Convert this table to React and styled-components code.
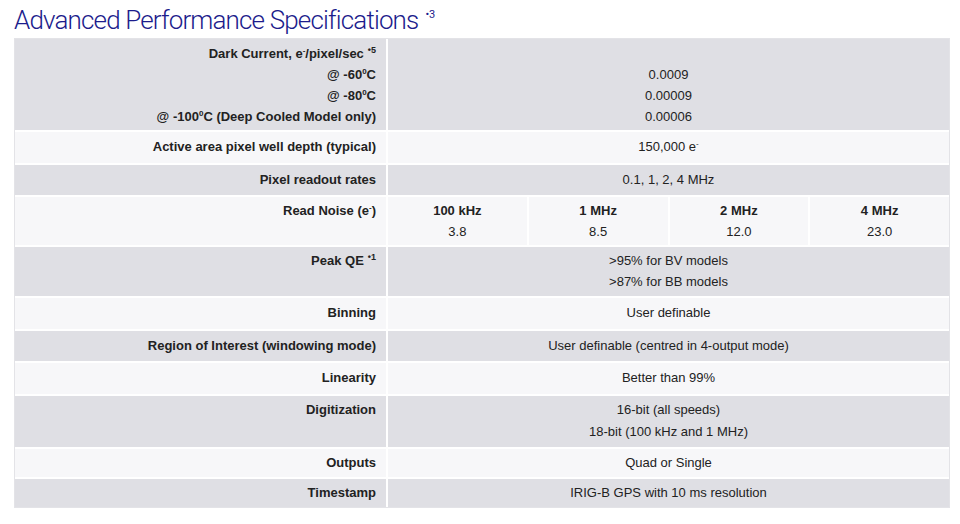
import styled, { createGlobalStyle } from "styled-components";

const GlobalStyle = createGlobalStyle`
  body {
    margin: 0;
    background: #fff;
    font-family: "Liberation Sans", Arial, sans-serif;
  }
`;

const Page = styled.div`
  padding: 0 10px 0 14px;
`;

const Title = styled.h1`
  margin: 0;
  height: 38px;
  font-family: Roboto, "Liberation Sans", sans-serif;
  font-weight: 300;
  font-size: 26px;
  line-height: 30px;
  color: #1c1c8c;
  letter-spacing: -0.85px;

  sup {
    font-size: 11px;
    font-weight: 400;
    vertical-align: 11px;
    margin-left: 7px;
    letter-spacing: 0;
  }
`;

const Table = styled.div`
  display: flex;
  flex-direction: column;
  gap: 2px;
  border: 1px solid #e3e3e7;
  background: #fff;
  color: #222;
  font-size: 13px;
  line-height: 20px;

  sup {
    font-size: 8px;
    line-height: 0;
    vertical-align: 5px;
  }
`;

const Row = styled.div`
  display: grid;
  grid-template-columns: 371px 1fr;
  column-gap: 2px;
`;

const Cell = styled.div`
  background: ${(p) => (p.$shade ? "#dfdfe4" : "#f7f7f9")};
  padding: ${(p) => p.$pad || "5px 10px 5.5px"};
  line-height: ${(p) => p.$lh || "20px"};
`;

const Label = styled(Cell)`
  text-align: right;
  font-weight: bold;
`;

const Value = styled(Cell)`
  text-align: center;
`;

const Dot = styled.sup`
  margin-left: 4px;
  && {
    font-size: 9px;
  }
`;

const SubGrid = styled.div`
  display: grid;
  grid-template-columns: repeat(4, 1fr);
  column-gap: 2px;
  height: 100%;
  background: #fff;
`;

const SubCell = styled.div`
  background: #f7f7f9;
  text-align: center;
  padding: 3px 4px;
  line-height: 21px;

  b {
    display: block;
  }
`;

const noise = [
  ["100 kHz", "3.8"],
  ["1 MHz", "8.5"],
  ["2 MHz", "12.0"],
  ["4 MHz", "23.0"],
];

const Spec = ({ shade, label, pad, lh, children }) => (
  <Row>
    <Label $shade={shade} $pad={pad} $lh={lh}>
      {label}
    </Label>
    <Value $shade={shade} $pad={pad} $lh={lh}>
      {children}
    </Value>
  </Row>
);

const Lines = ({ items }) => items.map((t, i) => <div key={i}>{t}</div>);

export default function App() {
  return (
    <Page>
      <GlobalStyle />
      <Title>
        Advanced Performance Specifications<sup>•3</sup>
      </Title>
      <Table>
        <Spec
          shade
          pad="3.5px 10px"
          lh="21px"
          label={
            <>
              <div>
                Dark Current, e<sup>-</sup>/pixel/sec<Dot>•5</Dot>
              </div>
              <div>
                @ -60<sup>0</sup>C
              </div>
              <div>
                @ -80<sup>0</sup>C
              </div>
              <div>
                @ -100<sup>0</sup>C (Deep Cooled Model only)
              </div>
            </>
          }
        >
          <Lines items={["\u00a0", "0.0009", "0.00009", "0.00006"]} />
        </Spec>
        <Spec label="Active area pixel well depth (typical)">
          150,000 e<sup>-</sup>
        </Spec>
        <Spec shade label="Pixel readout rates">
          0.1, 1, 2, 4 MHz
        </Spec>
        <Row>
          <Label $pad="3px 10px" $lh="21px">
            Read Noise (e<sup>-</sup>)
          </Label>
          <Value $pad="0">
            <SubGrid>
              {noise.map(([rate, val]) => (
                <SubCell key={rate}>
                  <b>{rate}</b>
                  {val}
                </SubCell>
              ))}
            </SubGrid>
          </Value>
        </Row>
        <Spec
          shade
          pad="3px 10px 4px"
          lh="21px"
          label={
            <>
              Peak QE<Dot>•1</Dot>
            </>
          }
        >
          <Lines items={[">95% for BV models", ">87% for BB models"]} />
        </Spec>
        <Spec label="Binning">User definable</Spec>
        <Spec shade label="Region of Interest (windowing mode)">
          User definable (centred in 4-output mode)
        </Spec>
        <Spec label="Linearity">Better than 99%</Spec>
        <Spec shade pad="3px 10px 4px" lh="22px" label="Digitization">
          <Lines items={["16-bit (all speeds)", "18-bit (100 kHz and 1 MHz)"]} />
        </Spec>
        <Spec pad="4px 10px" label="Outputs">
          Quad or Single
        </Spec>
        <Spec shade pad="4px 10px" label="Timestamp">
          IRIG-B GPS with 10 ms resolution
        </Spec>
      </Table>
    </Page>
  );
}
